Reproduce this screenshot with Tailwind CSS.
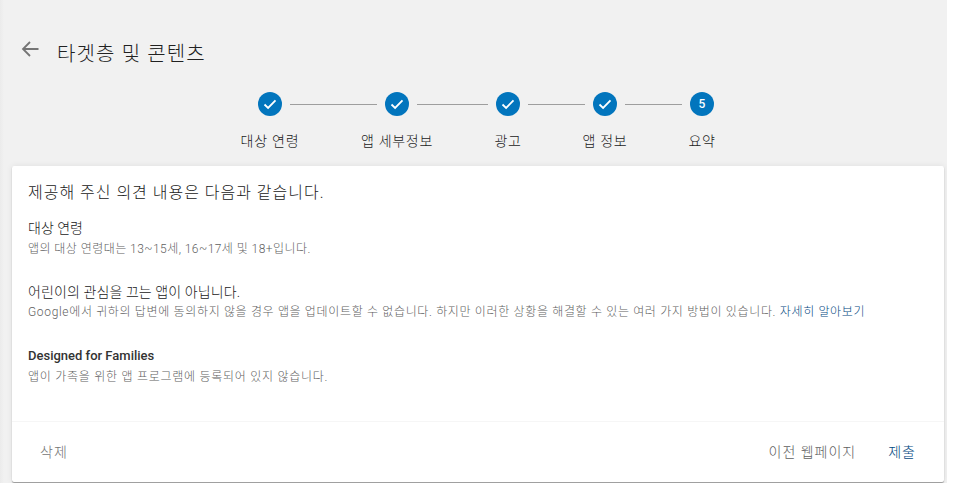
<!DOCTYPE html>
<html lang="ko">
<head>
    <meta charset="UTF-8">
    <title>타겟층 및 콘텐츠</title>
    <script src="https://cdn.jsdelivr.net/npm/@tailwindcss/browser@4"></script>
</head>
<body class="bg-white font-['Roboto','Noto_Sans_CJK_KR',sans-serif] overflow-hidden">
    <div class="w-[947px] h-[483px] overflow-hidden bg-[linear-gradient(to_right,#ebebeb,#f1f1f1_4px)] pl-3 pr-[3px] flex flex-col">
        <!-- header -->
        <div class="flex items-center h-[30px] mt-9 pl-[9px]">
            <svg class="w-[18px] h-[18px] -mt-1" viewBox="0 0 18 18" fill="none" stroke="#757575" stroke-width="1.8">
                <path d="M17.5 9H2M9 2L2 9l7 7"/>
            </svg>
            <h1 class="ml-[18px] mt-[6px] text-[20px] leading-[30px] tracking-[1.15px] font-light text-[#212121]">타겟층 및 콘텐츠</h1>
        </div>

        <!-- stepper -->
        <div class="flex mt-[26px] pl-[246px] h-[74px]">
            <div class="w-6 flex flex-col items-center">
                <div class="w-6 h-6 rounded-full bg-[#0275bd] flex items-center justify-center">
                    <svg class="w-3.5 h-3.5" viewBox="0 0 14 14" fill="none" stroke="white" stroke-width="1.8"><path d="M1.5 7.5l3.6 3.5 7.4-7.6"/></svg>
                </div>
                <span class="mt-[15px] text-sm leading-5 tracking-[0.8px] whitespace-nowrap text-[#212121] font-light">대상 연령</span>
            </div>
            <div class="w-[87px] h-px bg-[#9e9e9e] mt-3 mx-2"></div>
            <div class="w-6 flex flex-col items-center">
                <div class="w-6 h-6 rounded-full bg-[#0275bd] flex items-center justify-center">
                    <svg class="w-3.5 h-3.5" viewBox="0 0 14 14" fill="none" stroke="white" stroke-width="1.8"><path d="M1.5 7.5l3.6 3.5 7.4-7.6"/></svg>
                </div>
                <span class="mt-[15px] text-sm leading-5 tracking-[0.7px] whitespace-nowrap text-[#212121] font-light">앱 세부정보</span>
            </div>
            <div class="w-[71px] h-px bg-[#9e9e9e] mt-3 mx-2"></div>
            <div class="w-6 flex flex-col items-center">
                <div class="w-6 h-6 rounded-full bg-[#0275bd] flex items-center justify-center">
                    <svg class="w-3.5 h-3.5" viewBox="0 0 14 14" fill="none" stroke="white" stroke-width="1.8"><path d="M1.5 7.5l3.6 3.5 7.4-7.6"/></svg>
                </div>
                <span class="mt-[15px] text-sm leading-5 tracking-[0.7px] whitespace-nowrap text-[#212121] font-light">광고</span>
            </div>
            <div class="w-[57px] h-px bg-[#9e9e9e] mt-3 mx-2"></div>
            <div class="w-6 flex flex-col items-center">
                <div class="w-6 h-6 rounded-full bg-[#0275bd] flex items-center justify-center">
                    <svg class="w-3.5 h-3.5" viewBox="0 0 14 14" fill="none" stroke="white" stroke-width="1.8"><path d="M1.5 7.5l3.6 3.5 7.4-7.6"/></svg>
                </div>
                <span class="mt-[15px] text-sm leading-5 tracking-[0.7px] whitespace-nowrap text-[#212121] font-light">앱 정보</span>
            </div>
            <div class="w-[57px] h-px bg-[#9e9e9e] mt-3 mx-2"></div>
            <div class="w-6 flex flex-col items-center">
                <div class="w-6 h-6 rounded-full bg-[#0275bd] flex items-center justify-center text-white text-xs font-medium">5</div>
                <span class="mt-[15px] text-sm leading-5 tracking-[0.7px] whitespace-nowrap text-[#212121] font-light">요약</span>
            </div>
        </div>

        <!-- card -->
        <div class="w-[932px] h-[316px] shrink-0 bg-white rounded-[2px] shadow-[0_1px_1px_rgba(0,0,0,0.35),0_0_6px_rgba(0,0,0,0.08)] flex flex-col">
            <div class="flex-1 pl-4 pt-4">
                <h2 class="text-base leading-[22px] tracking-[1px] font-light text-[#212121]">제공해 주신 의견 내용은 다음과 같습니다.</h2>
                <div class="mt-[15px]">
                    <h3 class="text-sm leading-[18px] font-light text-[#212121]">대상 연령</h3>
                    <p class="mt-[3px] text-xs leading-[18px] tracking-[0.45px] font-light text-[#5f5f5f]">앱의 대상 연령대는 13~15세, 16~17세 및 18+입니다.</p>
                </div>
                <div class="mt-[25px]">
                    <h3 class="text-sm leading-[18px] tracking-[0.1px] font-light text-[#212121]">어린이의 관심을 끄는 앱이 아닙니다.</h3>
                    <p class="mt-[2px] text-xs leading-[18px] tracking-[0.66px] font-light text-[#5f5f5f]">Google에서 귀하의 답변에 동의하지 않을 경우 앱을 업데이트할 수 없습니다. 하지만 이러한 상황을 해결할 수 있는 여러 가지 방법이 있습니다. <a class="text-[#01487f]">자세히 알아보기</a></p>
                </div>
                <div class="mt-[26px]">
                    <h3 class="text-[13px] leading-[18px] font-medium text-[#333333]">Designed for Families</h3>
                    <p class="mt-[3px] text-xs leading-[18px] tracking-[0.74px] font-light text-[#5f5f5f]">앱이 가족을 위한 앱 프로그램에 등록되어 있지 않습니다.</p>
                </div>
            </div>
            <div class="h-[61px] border-t border-[#f6f6f6] flex items-center pl-7 pr-[28px] text-sm font-light tracking-[1px]">
                <button class="text-[#757575]">삭제</button>
                <button class="ml-auto text-[#616161]">이전 웹페이지</button>
                <button class="ml-8 text-[#01487f]">제출</button>
            </div>
        </div>
    </div>
</body>
</html>
